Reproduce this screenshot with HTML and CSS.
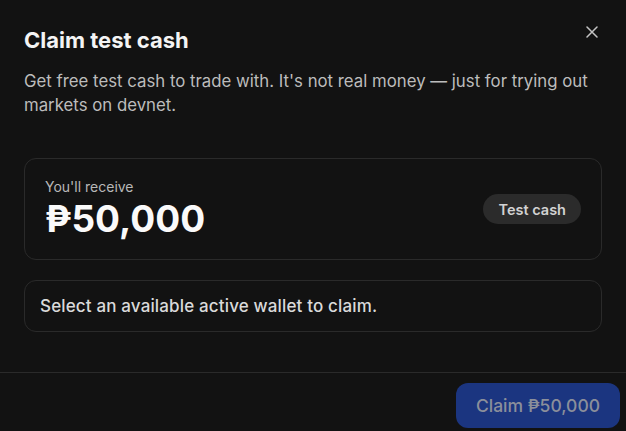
FILE: index.html
```html
<!DOCTYPE html>
<html lang="en">
<head>
<meta charset="utf-8">
<title>Claim test cash</title>
<link rel="stylesheet" href="styles.css">
</head>
<body>
<div class="modal">
  <div class="modal-body">
    <h2 class="title">Claim test cash</h2>
    <button class="close" aria-label="Close">
      <svg width="12" height="12" viewBox="0 0 12 12"><path d="M1 1L11 11M11 1L1 11" stroke="currentColor" stroke-width="1.5" stroke-linecap="round"/></svg>
    </button>
    <p class="desc">Get free test cash to trade with. It's not real money — just for trying out markets on devnet.</p>
    <div class="card amount-card">
      <div class="amount-info">
        <div class="label">You'll receive</div>
        <div class="amount">₱50,000</div>
      </div>
      <span class="badge">Test cash</span>
    </div>
    <div class="card notice">Select an available active wallet to claim.</div>
  </div>
  <div class="footer">
    <button class="claim" disabled>Claim ₱50,000</button>
  </div>
</div>
</body>
</html>
```
FILE: styles.css
```css
* { box-sizing: border-box; }
html, body { margin: 0; background: #121212; }
body {
  font-family: Inter, "Noto Sans", "DejaVu Sans", sans-serif;
  color: #f2f2f2;
  width: 626px;
  height: 431px;
  overflow: hidden;
}
.modal { position: relative; }
.modal-body { padding: 26px 24px 40px; }
.title {
  margin: 0;
  font-size: 22px;
  line-height: 28px;
  font-weight: 700;
  color: #f4f4f4;
}
.close {
  position: absolute;
  top: 26px;
  right: 28px;
  width: 12px;
  height: 12px;
  padding: 0;
  border: 0;
  background: none;
  color: #c4c4c4;
  display: flex;
}
.desc {
  margin: 15px 0 0;
  font-size: 16.8px;
  line-height: 24px;
  color: #bcbcbc;
}
.card {
  border: 1px solid #2a2a2a;
  border-radius: 12px;
}
.amount-card {
  margin-top: 41px;
  padding: 18px 20px;
  display: flex;
  align-items: center;
  justify-content: space-between;
}
.label {
  font-size: 14px;
  line-height: 20px;
  color: #b8b8b8;
}
.amount {
  font-size: 37px;
  line-height: 44px;
  font-weight: 700;
  color: #fafafa;
}
.badge {
  height: 30px;
  padding: 0 15px;
  border-radius: 15px;
  background: #2b2b2b;
  color: #d2d2d2;
  font-size: 14.5px;
  font-weight: 600;
  display: flex;
  align-items: center;
}
.notice {
  margin-top: 20px;
  padding: 13px 15px;
  font-size: 17px;
  line-height: 24px;
  font-weight: 500;
  letter-spacing: 0.15px;
  color: #dadada;
}
.footer {
  border-top: 1px solid #2a2a2a;
  padding: 10px 6px;
  display: flex;
  justify-content: flex-end;
}
.claim {
  height: 45px;
  padding: 0 20px;
  border: 0;
  border-radius: 12px;
  background: #1b3580;
  color: #8b8f9b;
  font-family: inherit;
  font-size: 17.5px;
  font-weight: 500;
}
```
